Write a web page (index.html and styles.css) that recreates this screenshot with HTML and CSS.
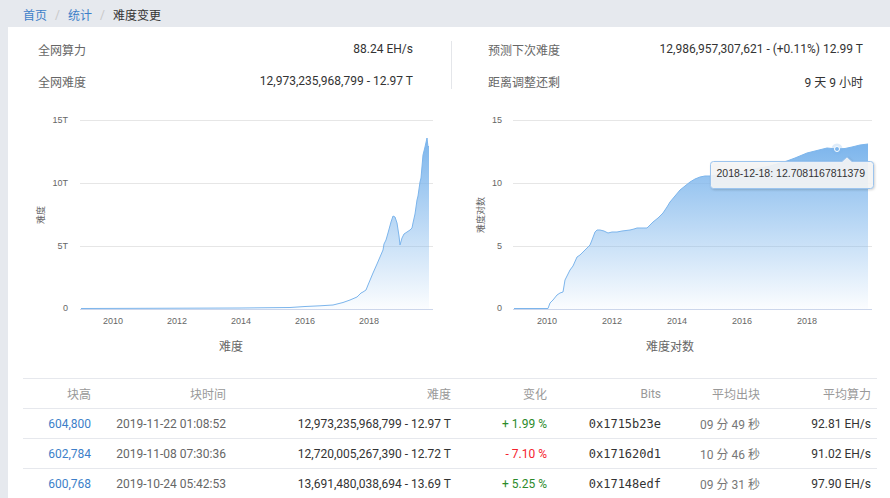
FILE: index.html
```html
<!DOCTYPE html>
<html lang="zh">
<head>
<meta charset="utf-8">
<title>难度变更</title>
<link rel="stylesheet" href="styles.css">
</head>
<body>
<nav class="crumbs">
  <a class="link" href="#">首页</a><span class="sep">/</span><a class="link" href="#">统计</a><span class="sep">/</span><span class="cur">难度变更</span>
</nav>
<main class="card">
  <section class="stats">
    <div class="stat-col left">
      <div class="stat"><span class="label">全网算力</span><span class="val">88.24 EH/s</span></div>
      <div class="stat"><span class="label">全网难度</span><span class="val">12,973,235,968,799 - 12.97 T</span></div>
    </div>
    <div class="divider"></div>
    <div class="stat-col right">
      <div class="stat"><span class="label">预测下次难度</span><span class="val">12,986,957,307,621 - (+0.11%) 12.99 T</span></div>
      <div class="stat"><span class="label">距离调整还剩</span><span class="val">9 天 9 小时</span></div>
    </div>
  </section>

  <section class="charts">
    <svg class="chart" viewBox="23 100 427 270" width="427" height="270">
      <defs>
        <linearGradient id="gL" x1="0" y1="0" x2="0" y2="1">
          <stop offset="0" stop-color="#7cb5ec"/>
          <stop offset="1" stop-color="#7cb5ec" stop-opacity="0.03"/>
        </linearGradient>
      </defs>
      <g class="grid">
        <line x1="80" y1="120.5" x2="433" y2="120.5"/>
        <line x1="80" y1="183.5" x2="433" y2="183.5"/>
        <line x1="80" y1="246.5" x2="433" y2="246.5"/>
      </g>
      <g class="ylab">
        <text x="68" y="123">15T</text>
        <text x="68" y="186">10T</text>
        <text x="68" y="249">5T</text>
        <text x="68" y="311">0</text>
      </g>
      <text class="ytitle" transform="translate(44 215) rotate(-90)">难度</text>
      <path class="area" fill="url(#gL)" d="M81,308.5 L150,308.3 L240,308 L290,307.5 L305,306.5 L320,305.8 L333,305 L343,302.5 L350,300 L357,297 L361,293 L363,292 L366,290 L368,285 L373,273 L377,264 L380,257 L383,250 L384,244 L386,240 L388,233 L391,222 L393,216 L395,217 L397,223 L399,236 L400,245 L402,238 L404,234 L407,232 L410,230 L412,228 L413,223 L415,214 L417,200 L418,196 L420,182 L421,178 L423,155 L425,147 L427,138 L428,147 L429,146 L429,309 L81,309 Z"/>
      <path class="line" d="M81,308.5 L150,308.3 L240,308 L290,307.5 L305,306.5 L320,305.8 L333,305 L343,302.5 L350,300 L357,297 L361,293 L363,292 L366,290 L368,285 L373,273 L377,264 L380,257 L383,250 L384,244 L386,240 L388,233 L391,222 L393,216 L395,217 L397,223 L399,236 L400,245 L402,238 L404,234 L407,232 L410,230 L412,228 L413,223 L415,214 L417,200 L418,196 L420,182 L421,178 L423,155 L425,147 L427,138 L428,147 L429,146"/>
      <line class="axis" x1="80" y1="309.5" x2="433" y2="309.5"/>
      <g class="xlab">
        <text x="113" y="324">2010</text>
        <text x="177" y="324">2012</text>
        <text x="241" y="324">2014</text>
        <text x="305" y="324">2016</text>
        <text x="369" y="324">2018</text>
      </g>
      <text class="xtitle" x="231" y="351">难度</text>
    </svg>

    <svg class="chart" viewBox="450 100 427 270" width="427" height="270">
      <defs>
        <linearGradient id="gR" x1="0" y1="0" x2="0" y2="1">
          <stop offset="0" stop-color="#7cb5ec"/>
          <stop offset="1" stop-color="#7cb5ec" stop-opacity="0.03"/>
        </linearGradient>
      </defs>
      <g class="grid">
        <line x1="513" y1="120.5" x2="872" y2="120.5"/>
        <line x1="513" y1="183.5" x2="872" y2="183.5"/>
        <line x1="513" y1="246.5" x2="872" y2="246.5"/>
      </g>
      <g class="ylab">
        <text x="502" y="123">15</text>
        <text x="502" y="186">10</text>
        <text x="502" y="249">5</text>
        <text x="502" y="311">0</text>
      </g>
      <text class="ytitle" transform="translate(484 215) rotate(-90)">难度对数</text>
      <path class="area" fill="url(#gR)" d="M514,308.5 L548,308.5 L550,303 L553,300 L557,295 L560,293 L563,292 L565,280 L567,276 L570,270 L573,266 L577,257 L580,255 L583,252 L586,249 L590,245 L592,240 L595,232 L597,230 L600,230 L604,231 L608,233 L612,232 L617,232 L622,231 L630,230 L634,229 L637,228 L643,228 L647,228 L650,225 L653,222 L658,218 L663,213 L667,207 L670,202 L675,196 L680,190 L685,186 L690,182 L695,179 L700,177 L705,176 L710,176 L730,173 L750,170 L770,166 L787,161 L795,158 L807,153 L815,151 L827,148 L837,149 L845,148.5 L852,147 L860,145 L868,144 L868,309 L514,309 Z"/>
      <path class="line" d="M514,308.5 L548,308.5 L550,303 L553,300 L557,295 L560,293 L563,292 L565,280 L567,276 L570,270 L573,266 L577,257 L580,255 L583,252 L586,249 L590,245 L592,240 L595,232 L597,230 L600,230 L604,231 L608,233 L612,232 L617,232 L622,231 L630,230 L634,229 L637,228 L643,228 L647,228 L650,225 L653,222 L658,218 L663,213 L667,207 L670,202 L675,196 L680,190 L685,186 L690,182 L695,179 L700,177 L705,176 L710,176 L730,173 L750,170 L770,166 L787,161 L795,158 L807,153 L815,151 L827,148 L837,149 L845,148.5 L852,147 L860,145 L868,144"/>
      <line class="axis" x1="513" y1="309.5" x2="872" y2="309.5"/>
      <g class="xlab">
        <text x="547" y="324">2010</text>
        <text x="612" y="324">2012</text>
        <text x="677" y="324">2014</text>
        <text x="742" y="324">2016</text>
        <text x="807" y="324">2018</text>
      </g>
      <text class="xtitle" x="670" y="351">难度对数</text>
      <circle class="halo" cx="837" cy="149" r="5.5"/>
      <circle class="dot" cx="837" cy="149" r="2.5"/>
      <g class="tip">
        <path class="tip-box" d="M713.5,161.5 H842 L847,157 L852,161.5 H870.5 Q873.5,161.5 873.5,164.5 V185.5 Q873.5,188.5 870.5,188.5 H713.5 Q710.5,188.5 710.5,185.5 V164.5 Q710.5,161.5 713.5,161.5 Z"/>
        <text class="tip-text" x="716.5" y="176.5">2018-12-18: 12.7081167811379</text>
      </g>
    </svg>
  </section>

  <table class="blocks">
    <colgroup>
      <col class="c1"><col class="c2"><col class="c3"><col class="c4"><col class="c5"><col class="c6"><col class="c7">
    </colgroup>
    <thead>
      <tr><th>块高</th><th>块时间</th><th>难度</th><th>变化</th><th>Bits</th><th>平均出块</th><th>平均算力</th></tr>
    </thead>
    <tbody>
      <tr><td class="h"><a class="link" href="#">604,800</a></td><td class="t">2019-11-22 01:08:52</td><td>12,973,235,968,799 - 12.97 T</td><td class="up">+ 1.99 %</td><td class="bits">0x1715b23e</td><td class="avg">09 分 49 秒</td><td>92.81 EH/s</td></tr>
      <tr><td class="h"><a class="link" href="#">602,784</a></td><td class="t">2019-11-08 07:30:36</td><td>12,720,005,267,390 - 12.72 T</td><td class="down">- 7.10 %</td><td class="bits">0x171620d1</td><td class="avg">10 分 46 秒</td><td>91.02 EH/s</td></tr>
      <tr><td class="h"><a class="link" href="#">600,768</a></td><td class="t">2019-10-24 05:42:53</td><td>13,691,480,038,694 - 13.69 T</td><td class="up">+ 5.25 %</td><td class="bits">0x17148edf</td><td class="avg">09 分 31 秒</td><td>97.90 EH/s</td></tr>
    </tbody>
  </table>
</main>
</body>
</html>
```

FILE: styles.css
```css
html, body {
  margin: 0;
  padding: 0;
}

body {
  background: #e6e9ee;
  font-family: Roboto, "Noto Sans CJK SC", sans-serif;
  font-size: 12px;
  color: #333;
  height: 498px;
  overflow: hidden;
}

.link {
  color: #3d7fc9;
  text-decoration: none;
}

.crumbs {
  box-sizing: border-box;
  height: 27px;
  padding: 2px 0 0 23px;
  display: flex;
  align-items: center;
  gap: 8px;
  font-size: 12px;
}

.crumbs .sep {
  color: #c8c8c8;
}

.crumbs .cur {
  color: #333;
}

.card {
  display: block;
  margin-left: 8px;
  background: #fff;
  padding: 6px 13px 30px 15px;
}

.stats {
  display: flex;
  align-items: center;
}

.stat-col {
  box-sizing: border-box;
}

.stat-col.left {
  width: 428px;
  padding: 0 38px 0 15px;
}

.stat-col.right {
  flex: 1;
  padding: 0 14px 0 36px;
}

.divider {
  width: 1px;
  height: 48px;
  background: #e4e6ea;
}

.stat {
  height: 32px;
  display: flex;
  align-items: center;
  justify-content: space-between;
}

.label {
  color: #666;
}

.val {
  color: #333;
}

.charts {
  display: flex;
  margin-top: 3px;
}

.chart {
  display: block;
  font-family: "Liberation Sans", "Noto Sans CJK SC", sans-serif;
}

.grid line {
  stroke: #e6e6e6;
  stroke-width: 1;
}

.axis {
  stroke: #ccd6eb;
  stroke-width: 1;
}

.ylab text {
  font-size: 9px;
  fill: #666;
  text-anchor: end;
}

.xlab text {
  font-size: 9px;
  fill: #666;
  text-anchor: middle;
}

.ytitle {
  font-size: 9px;
  fill: #666;
  text-anchor: middle;
}

.xtitle {
  font-size: 12px;
  fill: #666;
  text-anchor: middle;
  font-family: "Noto Sans CJK SC", sans-serif;
}

.line {
  fill: none;
  stroke: #7cb5ec;
  stroke-width: 1;
  stroke-linejoin: round;
}

.halo {
  fill: #7cb5ec;
  fill-opacity: 0.25;
}

.dot {
  fill: #7cb5ec;
  stroke: #fff;
  stroke-width: 1;
}

.tip-box {
  fill: #f7f7f7;
  fill-opacity: 0.9;
  stroke: #9cc4ee;
  stroke-width: 1;
  filter: drop-shadow(1px 1px 1px rgba(0, 0, 0, 0.18));
}

.tip-text {
  font-size: 10.5px;
  fill: #333;
}

.blocks {
  width: 854px;
  margin-top: 8px;
  border-collapse: collapse;
  table-layout: fixed;
}

.c1 { width: 74px; }
.c2 { width: 135px; }
.c3 { width: 225px; }
.c4 { width: 96px; }
.c5 { width: 114px; }
.c6 { width: 99px; }
.c7 { width: 111px; }

.blocks th,
.blocks td {
  height: 29px;
  padding: 0 6px;
  text-align: right;
  border-top: 1px solid #e6e8ed;
  white-space: nowrap;
  font-size: 12px;
}

.blocks th {
  font-weight: normal;
  color: #999;
}

.blocks td {
  color: #333;
}

.blocks td.t {
  color: #666;
}

.blocks td.up {
  color: #2b8a2b;
}

.blocks td.down {
  color: #f5222d;
}

.blocks td.bits {
  font-family: "DejaVu Sans Mono", monospace;
  font-size: 12px;
  color: #333;
}

.blocks td.avg {
  color: #777;
}
```
